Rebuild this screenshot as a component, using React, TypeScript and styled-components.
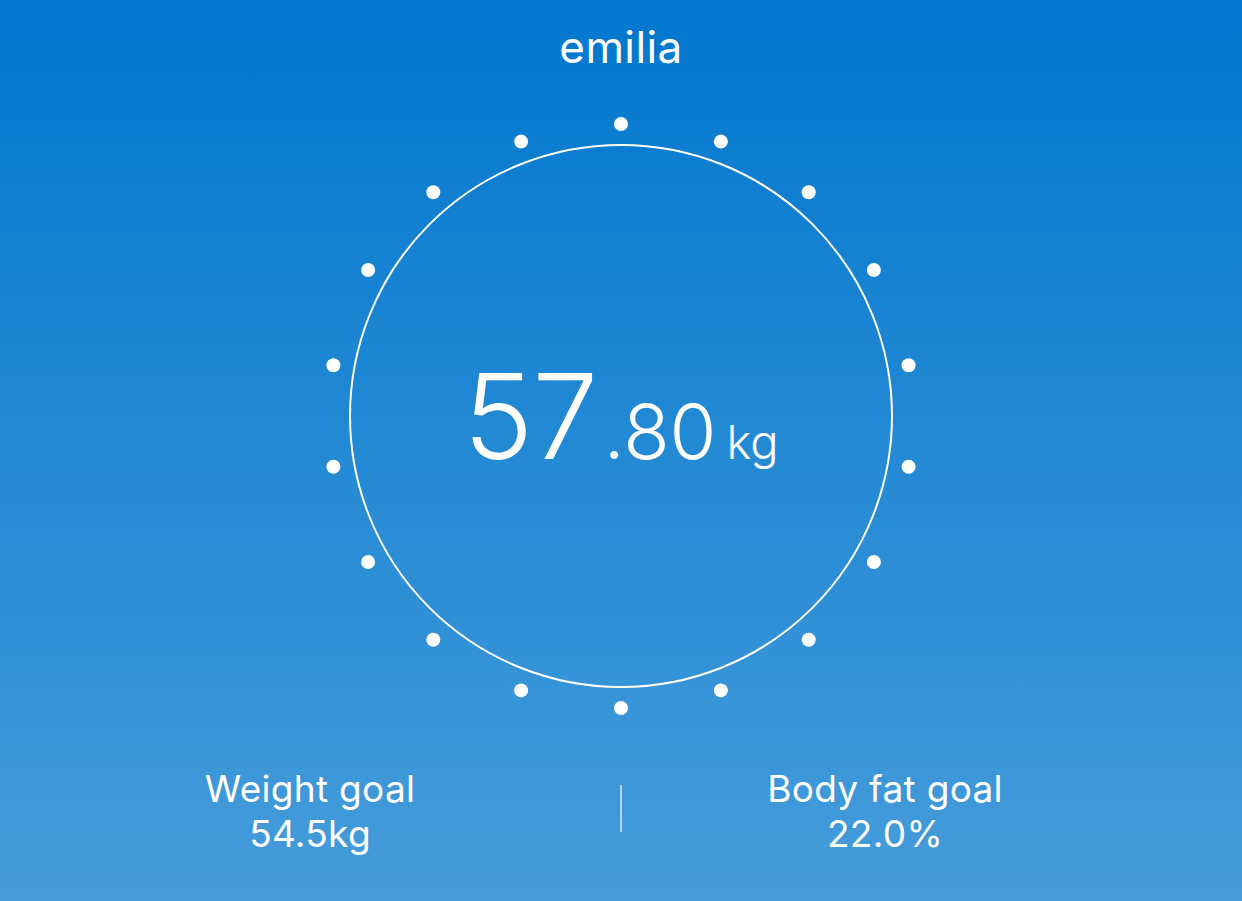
import React from "react";
import styled, { createGlobalStyle } from "styled-components";

const GlobalStyle = createGlobalStyle`
  html, body {
    margin: 0;
    padding: 0;
  }
  body {
    font-family: Inter, "Open Sans", "Liberation Sans", sans-serif;
    color: #ffffff;
  }
`;

const Screen = styled.main`
  width: 1242px;
  height: 901px;
  overflow: hidden;
  display: flex;
  flex-direction: column;
  align-items: center;
  background: linear-gradient(180deg, #0177ce 0%, #469cda 100%);
`;

const Header = styled.header`
  height: 106px;
  box-sizing: border-box;
  padding-top: 23px;
  font-size: 44px;
  line-height: 48px;
  font-weight: 400;
  letter-spacing: 0.4px;
`;

const Dial = styled.section`
  display: grid;
  width: 620px;
  height: 620px;
  place-items: center;

  & > * {
    grid-area: 1 / 1;
  }
`;

const Readout = styled.div`
  display: flex;
  align-items: baseline;
  margin-top: 0;
`;

const Whole = styled.span`
  font-size: 118px;
  line-height: 1;
  font-weight: 300;
  letter-spacing: -1px;
`;

const Fraction = styled.span`
  font-size: 76px;
  line-height: 1;
  font-weight: 300;
  margin-left: 6px;
`;

const Unit = styled.span`
  font-size: 47px;
  line-height: 1;
  font-weight: 300;
  margin-left: 10px;
`;

const Goals = styled.section`
  margin-top: 40px;
  width: 100%;
  display: grid;
  grid-template-columns: 620px 2px 526px;
`;

const Goal = styled.div`
  text-align: center;
  font-size: 37px;
  line-height: 45px;
  font-weight: 400;
  letter-spacing: 0.3px;
`;

const Divider = styled.div`
  width: 2px;
  height: 47px;
  align-self: center;
  margin-top: -6px;
  background: rgba(255, 255, 255, 0.6);
`;

const DOTS = Array.from({ length: 18 }, (_, i) => {
  const a = (i * 20 * Math.PI) / 180;
  return { x: 310 + 292 * Math.sin(a), y: 310 - 292 * Math.cos(a) };
});

const Ring = () => (
  <svg width="620" height="620" viewBox="0 0 620 620">
    <circle cx="310" cy="310" r="271" fill="none" stroke="#fff" strokeWidth="2" />
    {DOTS.map((d, i) => (
      <circle key={i} cx={d.x} cy={d.y} r="7" fill="#fff" />
    ))}
  </svg>
);

export default function App() {
  return (
    <>
      <GlobalStyle />
      <Screen>
        <Header>emilia</Header>
        <Dial>
          <Ring />
          <Readout>
            <Whole>57</Whole>
            <Fraction>.80</Fraction>
            <Unit>kg</Unit>
          </Readout>
        </Dial>
        <Goals>
          <Goal>
            Weight goal
            <br />
            54.5kg
          </Goal>
          <Divider />
          <Goal>
            Body fat goal
            <br />
            22.0%
          </Goal>
        </Goals>
      </Screen>
    </>
  );
}
